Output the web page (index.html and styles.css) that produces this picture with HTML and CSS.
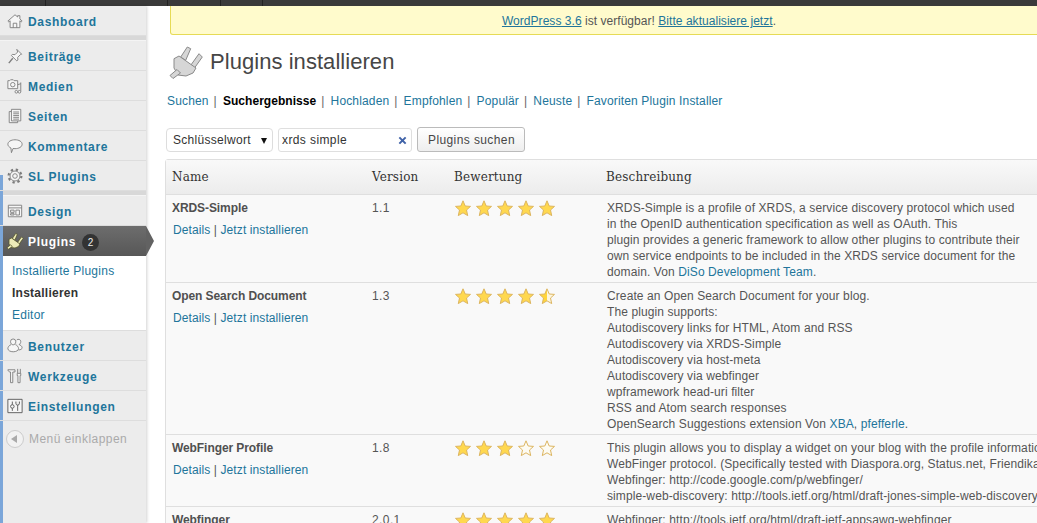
FILE: index.html
```html
<!DOCTYPE html>
<html lang="de">
<head>
    <meta charset="UTF-8">
    <title>Plugins installieren</title>
    <link rel="stylesheet" href="styles.css">
</head>
<body>
    <svg class="defs" width="0" height="0">
        <defs>
            <linearGradient id="half"><stop offset="50%" stop-color="#ffd53c"/><stop offset="50%" stop-color="#fdf6df"/></linearGradient>
            <symbol id="star" viewBox="0 0 16 17"><path d="M8 .8l2.2 5.2 5.3.4-4 3.600 1.200 5.600L8 12.800l-4.700 2.800 1.200-5.600-4-3.600 5.300-.4z"/></symbol>
            <symbol id="plug" viewBox="0 0 36 36">
                <path d="M12.700 13L19.300 3l3.400 1.700-5 11.600zM22.700 21.300L31 9.700l3.300 3.300-8.300 11.700z"/>
                <path d="M6 14.700L11 12l17 12-3 5-7 3-8-1-4-7z"/>
                <path d="M9 25.500l3.500 3.500L5 34.500l-3-3z"/>
            </symbol>
        </defs>
    </svg>
    <div class="topbar"><span class="top-a"></span><span class="top-b"></span><span class="top-c"></span><span class="top-d"></span></div>
    <div class="layout">
        <nav class="sidebar">
            <a class="menu-item" href="#">
                <svg class="menu-icon" viewBox="0 0 18 18"><path d="M1 9l8-7 3 2.500V3h2.500v3.700L17 9l-1 1-1.500-1.200V16.500h-11V8.800L2 10zM7 16.500v-5h4v5"/></svg>Dashboard</a>
            <div class="menu-sep"></div>
            <a class="menu-item" href="#">
                <svg class="menu-icon" viewBox="0 0 18 18"><path d="M11 1.500l5.500 5.500-1.500.5-3 3 .3 3-1.300 1-6-6 1-1.300 3 .3 3-3z"/><path d="M6.500 11.500L2 17" stroke-width="1.500"/></svg>Beiträge</a>
            <a class="menu-item" href="#">
                <svg class="menu-icon" viewBox="0 0 18 18"><path d="M1 3h2l1-1h3l1 1h4v9H1z"/><circle cx="6.500" cy="7.500" r="2.500"/><path d="M15.500 5v10M12 7.500l3.500-1"/><circle cx="10.500" cy="15.500" r="1.500"/><circle cx="14" cy="15.500" r="1.500"/></svg>Medien</a>
            <a class="menu-item" href="#">
                <svg class="menu-icon" viewBox="0 0 18 18"><path d="M2.500 4H12v12.500H2.500z"/><path d="M5 1.500h10.500v13H5zM7 4.500h6.500M7 6.500h6.500M7 8.500h6.500M7 10.500h6.500M7 12.500h6.500"/></svg>Seiten</a>
            <a class="menu-item" href="#">
                <svg class="menu-icon" viewBox="0 0 18 18"><path d="M9 2c4.400 0 8 2 8 5s-3.600 5-8 5c-.8 0-1.500 0-2.200-.2L5 16.500l-.6-5.300C2.400 10.300 1 8.800 1 7c0-3 3.600-5 8-5z"/></svg>Kommentare</a>
            <a class="menu-item" href="#">
                <svg class="menu-icon" viewBox="0 0 18 18"><circle class="gear-teeth" cx="9" cy="9" r="7.200"/><circle cx="9" cy="9" r="5.600"/><circle cx="9" cy="9" r="2.600"/></svg>SL Plugins</a>
            <div class="menu-sep"></div>
            <a class="menu-item" href="#">
                <svg class="menu-icon" viewBox="0 0 18 18"><path d="M1.500 2.500h15v13h-15zM1.500 5.500h15M4 8h4v2.500H4zM4 12h4v1.500H4zM10 8h4v5.500h-4z"/></svg>Design</a>
            <a class="menu-item is-current" href="#">
                <svg class="plug-small"><use href="#plug"/></svg>Plugins<span class="count">2</span></a>
            <div class="submenu">
                <a href="#">Installierte Plugins</a>
                <a class="is-active" href="#">Installieren</a>
                <a href="#">Editor</a>
            </div>
            <a class="menu-item" href="#">
                <svg class="menu-icon" viewBox="0 0 18 18"><path d="M11 2.300a2.600 2.600 0 0 1 4.500 1.700c0 1.700-.9 3-2.100 3.300 1.800.6 3.600 2 3.600 3.700 0 1.300-1.400 2.300-4 2.500"/><path d="M4 4a2.900 2.900 0 1 1 5.800 0c0 2-1.100 3.700-2.900 3.700S4 6 4 4zM4.500 7.500C2.500 8.300 1 10 1 12c0 2 2.700 3.500 6 3.500s6-1.500 6-3.500c0-2-1.500-3.700-3.500-4.500"/></svg>Benutzer</a>
            <a class="menu-item" href="#">
                <svg class="menu-icon" viewBox="0 0 18 18"><path d="M1 2h8v2.500H6.500V16.500H4V4.500C2.500 4.500 1.500 4 1 2zM12 1v5M15 1v5M11.500 6h4v2.500h-.8v8h-2.400v-8h-.8z"/></svg>Werkzeuge</a>
            <a class="menu-item" href="#">
                <svg class="menu-icon square-icon" viewBox="0 0 18 18"><path d="M1 1.500h16v15H1zM6 4v3.500M12 10v4.500M6 11.500V14.500M10 4v2a2 2 0 0 0 4 0V4M12 8v2"/><circle cx="6" cy="9.500" r="2"/></svg>Einstellungen</a>
            <div class="collapse"><span class="collapse-btn"></span>Menü einklappen</div>
        </nav>
        <main class="content">
            <div class="update-nag"><a href="#">WordPress 3.6</a> ist verfügbar! <a href="#">Bitte aktualisiere jetzt</a>.</div>
            <div class="title-row">
                <svg class="title-icon"><use href="#plug"/></svg>
                <h1>Plugins installieren</h1>
            </div>
            <ul class="subnav">
                <li><a href="#">Suchen</a></li>
                <li><a class="is-current" href="#">Suchergebnisse</a></li>
                <li><a href="#">Hochladen</a></li>
                <li><a href="#">Empfohlen</a></li>
                <li><a href="#">Populär</a></li>
                <li><a href="#">Neuste</a></li>
                <li><a href="#">Favoriten Plugin Installer</a></li>
            </ul>
            <form class="search-form">
                <div class="select-wrap">
                    <select><option>Schlüsselwort</option></select>
                </div>
                <div class="input-wrap">
                    <input type="text" value="xrds simple">
                    <svg class="clear" viewBox="0 0 10 10"><path d="M1.500 1.500l7 7M8.500 1.500l-7 7"/></svg>
                </div>
                <button type="button">Plugins suchen</button>
            </form>
            <table class="plugins">
                <colgroup><col class="col-name"><col class="col-version"><col class="col-rating"><col></colgroup>
                <thead>
                    <tr><th>Name</th><th>Version</th><th>Bewertung</th><th>Beschreibung</th></tr>
                </thead>
                <tbody>
                    <tr class="row-a">
                        <td><strong>XRDS-Simple</strong><div class="actions"><a href="#">Details</a> | <a href="#">Jetzt installieren</a></div></td>
                        <td class="version">1.1</td>
                        <td><div class="stars"><svg class="star"><use href="#star"/></svg><svg class="star"><use href="#star"/></svg><svg class="star"><use href="#star"/></svg><svg class="star"><use href="#star"/></svg><svg class="star"><use href="#star"/></svg></div></td>
                        <td class="desc">XRDS-Simple is a profile of XRDS, a service discovery protocol which used<br>in the OpenID authentication specification as well as OAuth. This<br>plugin provides a generic framework to allow other plugins to contribute their<br>own service endpoints to be included in the XRDS service document for the<br>domain. Von <a href="#">DiSo Development Team</a>.</td>
                    </tr>
                    <tr class="row-b">
                        <td><strong>Open Search Document</strong><div class="actions"><a href="#">Details</a> | <a href="#">Jetzt installieren</a></div></td>
                        <td class="version">1.3</td>
                        <td><div class="stars"><svg class="star"><use href="#star"/></svg><svg class="star"><use href="#star"/></svg><svg class="star"><use href="#star"/></svg><svg class="star"><use href="#star"/></svg><svg class="star half"><use href="#star"/></svg></div></td>
                        <td class="desc">Create an Open Search Document for your blog.<br>The plugin supports:<br>Autodiscovery links for HTML, Atom and RSS<br>Autodiscovery via XRDS-Simple<br>Autodiscovery via host-meta<br>Autodiscovery via webfinger<br>wpframework head-uri filter<br>RSS and Atom search responses<br>OpenSearch Suggestions extension Von <a href="#">XBA</a>, <a href="#">pfefferle</a>.</td>
                    </tr>
                    <tr class="row-c">
                        <td><strong>WebFinger Profile</strong><div class="actions"><a href="#">Details</a> | <a href="#">Jetzt installieren</a></div></td>
                        <td class="version">1.8</td>
                        <td><div class="stars"><svg class="star"><use href="#star"/></svg><svg class="star"><use href="#star"/></svg><svg class="star"><use href="#star"/></svg><svg class="star empty"><use href="#star"/></svg><svg class="star empty"><use href="#star"/></svg></div></td>
                        <td class="desc">This plugin allows you to display a widget on your blog with the profile information<br>WebFinger protocol. (Specifically tested with Diaspora.org, Status.net, Friendika<br>Webfinger: http://code.google.com/p/webfinger/<br>simple-web-discovery: http://tools.ietf.org/html/draft-jones-simple-web-discovery</td>
                    </tr>
                    <tr class="row-d">
                        <td><strong>Webfinger</strong></td>
                        <td class="version">2.0.1</td>
                        <td><div class="stars"><svg class="star"><use href="#star"/></svg><svg class="star"><use href="#star"/></svg><svg class="star"><use href="#star"/></svg><svg class="star"><use href="#star"/></svg><svg class="star"><use href="#star"/></svg></div></td>
                        <td class="desc">Webfinger: http://tools.ietf.org/html/draft-ietf-appsawg-webfinger</td>
                    </tr>
                </tbody>
            </table>
        </main>
    </div>
</body>
</html>
```

FILE: styles.css
```css
html, body {
    height: 100%;
    overflow: hidden;
}
body {
    margin: 0;
    background: #fff;
    color: #555;
    font-family: "Liberation Sans", Arial, sans-serif;
    font-size: 12px;
    letter-spacing: 0.1px;
    display: flex;
    flex-direction: column;
}
a {
    color: #21759b;
    text-decoration: none;
}
.defs {
    display: block;
    height: 0;
}
.topbar {
    height: 6px;
    flex: none;
    display: flex;
    background: #3a3a3a;
}
.topbar span {
    border-right: 1px solid #222;
}
.top-a { width: 45px; }
.top-b { width: 121px; }
.top-c { width: 52px; }
.top-d { width: 41px; }

.layout {
    flex: 1;
    min-height: 0;
    display: flex;
}
.sidebar {
    position: relative;
    width: 146px;
    flex: none;
    background: #ececec;
    box-shadow: 1px 0 3px rgba(0, 0, 0, 0.18);
    z-index: 1;
}
.sidebar::before {
    content: "";
    position: absolute;
    left: 0;
    top: 169px;
    bottom: 0;
    width: 3px;
    background: #7ba6d9;
}
.menu-item {
    display: flex;
    align-items: center;
    position: relative;
    height: 27px;
    padding: 2px 0 0 28px;
    color: #21759b;
    font-size: 12px;
    font-weight: bold;
    letter-spacing: 0.68px;
    border-bottom: 1px solid #ddd;
}
.menu-icon {
    position: absolute;
    left: 7px;
    top: 7px;
    width: 16px;
    height: 16px;
    fill: #f6f6f6;
    stroke: #7c7c7c;
    stroke-width: 1;
}
.square-icon {
    stroke: #555;
}
.gear-teeth {
    fill: none;
    stroke-width: 2.400;
    stroke-dasharray: 2.600 3.050;
}
.menu-sep {
    height: 5px;
    background: #d8d8d8;
    border-bottom: 1px solid #f4f4f4;
    box-sizing: border-box;
}
.is-current.menu-item {
    margin-left: 3px;
    padding-left: 25px;
    height: 30px;
    box-sizing: border-box;
    background: linear-gradient(#6d6d6d, #575757);
    color: #fff;
    border-bottom: none;
}
.is-current.menu-item::after {
    content: "";
    position: absolute;
    left: 100%;
    top: 0;
    border-style: solid;
    border-width: 15px 0 15px 8px;
    border-color: transparent transparent transparent #626262;
}
.plug-small {
    position: absolute;
    left: 3px;
    top: 6px;
    width: 18px;
    height: 18px;
    fill: #eeecb8;
    stroke: #55552c;
    stroke-width: 1.600;
}
.count {
    width: 17px;
    height: 17px;
    margin-left: 6px;
    border-radius: 50%;
    background: #333;
    color: #eee;
    font-size: 10px;
    font-weight: normal;
    display: flex;
    align-items: center;
    justify-content: center;
    letter-spacing: 0;
}
.submenu {
    margin-left: 3px;
    height: 74px;
    background: #fff;
    border-bottom: 1px solid #ddd;
    padding-left: 9px;
    display: flex;
    flex-direction: column;
    justify-content: center;
}
.submenu a {
    height: 22px;
    line-height: 22px;
    font-size: 12px;
    letter-spacing: 0.25px;
}
.submenu .is-active {
    color: #333;
    font-weight: bold;
}
.collapse {
    position: relative;
    height: 28px;
    padding: 4px 0 0 29px;
    display: flex;
    align-items: center;
    color: #aaa;
    font-size: 12px;
    letter-spacing: 0.45px;
}
.collapse-btn {
    position: absolute;
    left: 6px;
    top: 9px;
    width: 16px;
    height: 16px;
    border: 1px solid #ccc;
    border-radius: 50%;
    background: #f2f2f2;
}
.collapse-btn::after {
    content: "";
    position: absolute;
    left: 4px;
    top: 4px;
    border-style: solid;
    border-width: 4px 6px 4px 0;
    border-color: transparent #aaa transparent transparent;
}

.content {
    flex: 1;
    min-width: 0;
    overflow: hidden;
    padding-left: 19px;
}
.update-nag {
    margin-left: 5px;
    width: 936px;
    height: 28px;
    line-height: 30px;
    background: #fffbcc;
    border: 1px solid #e6db55;
    border-top: none;
    border-radius: 0 0 3px 3px;
    text-align: center;
    color: #555;
    font-size: 12px;
    letter-spacing: 0.04px;
}
.update-nag a {
    text-decoration: underline;
}
.title-row {
    display: flex;
    align-items: center;
    margin-top: 9px;
    height: 36px;
}
.title-icon {
    width: 36px;
    height: 36px;
    margin-left: 3px;
    fill: #d6d6d6;
    stroke: #8a8a8a;
    stroke-width: 1;
    stroke-linejoin: round;
}
.title-row h1 {
    margin: 0 0 0 6px;
    font-size: 22px;
    font-weight: normal;
    letter-spacing: 0.05px;
    color: #464646;
}
.subnav {
    list-style: none;
    margin: 14px 0 0 2px;
    padding: 0;
    display: flex;
    line-height: 14px;
    color: #666;
    letter-spacing: 0.15px;
}
.subnav li + li::before {
    content: "|";
    margin: 0 6px 0 5px;
}
.subnav .is-current {
    color: #000;
    font-weight: bold;
    letter-spacing: 0.05px;
}
.search-form {
    margin-top: 19px;
    display: flex;
    align-items: center;
    gap: 5px;
    height: 25px;
}
.select-wrap {
    position: relative;
    margin-left: 1px;
}
.select-wrap::after {
    content: "";
    position: absolute;
    right: 6px;
    top: 10px;
    border-style: solid;
    border-width: 6px 3.500px 0;
    border-color: #111 transparent transparent;
}
.select-wrap select {
    display: block;
    appearance: none;
    width: 107px;
    height: 24px;
    padding: 0 0 0 6px;
    border: 1px solid #ddd;
    border-radius: 4px;
    background: #fff;
    color: #333;
    font: 12px "Liberation Sans", Arial, sans-serif;
    letter-spacing: 0.3px;
}
.input-wrap {
    position: relative;
}
.input-wrap input {
    display: block;
    width: 134px;
    height: 24px;
    box-sizing: border-box;
    padding: 0 3px;
    border: 1px solid #dfdfdf;
    border-radius: 3px;
    color: #333;
    font: 12px "Liberation Sans", Arial, sans-serif;
    letter-spacing: 0.4px;
}
.clear {
    position: absolute;
    right: 5px;
    top: 8px;
    width: 9px;
    height: 9px;
    fill: none;
    stroke: #3f62a8;
    stroke-width: 2.200;
}
.search-form button {
    width: 108px;
    height: 25px;
    padding: 0 0 0 1px;
    border: 1px solid #bbb;
    border-radius: 3px;
    background: linear-gradient(#fff, #eee);
    color: #464646;
    font: 12px "Liberation Sans", Arial, sans-serif;
    letter-spacing: 0.4px;
}
.plugins {
    margin-top: 7px;
    width: 1000px;
    table-layout: fixed;
    border-collapse: separate;
    border-spacing: 0;
    background: #f9f9f9;
    border: 1px solid #dfdfdf;
    border-radius: 3px 0 0 0;
}
.col-name { width: 200px; }
.col-version { width: 82px; }
.col-rating { width: 152px; }
.plugins th {
    height: 34px;
    padding: 0 6px;
    text-align: left;
    font-family: "DejaVu Serif", Georgia, serif;
    font-size: 12px;
    font-weight: normal;
    letter-spacing: 0.15px;
    color: #333;
    background: linear-gradient(#f9f9f9, #ececec);
    border-bottom: 1px solid #dfdfdf;
}
.plugins td {
    padding: 5px 7px 0;
    vertical-align: top;
    line-height: 16px;
    border-bottom: 1px solid #dfdfdf;
}
.row-a td { height: 82px; }
.row-b td { height: 146px; }
.row-c td { height: 66px; }
.plugins strong {
    display: block;
    margin-left: -1px;
    letter-spacing: -0.08px;
    color: #505050;
}
.plugins .version {
    padding-left: 6px;
    letter-spacing: 0.4px;
}
.actions {
    margin-top: 6px;
}
.desc {
    white-space: nowrap;
}
.stars {
    display: flex;
    gap: 5px;
}
.star {
    width: 16px;
    height: 17px;
    fill: #ffd84f;
    stroke: #dcb560;
    stroke-width: 1;
}
.star.half {
    fill: url(#half);
}
.star.empty {
    fill: #fdfbf2;
}
```
